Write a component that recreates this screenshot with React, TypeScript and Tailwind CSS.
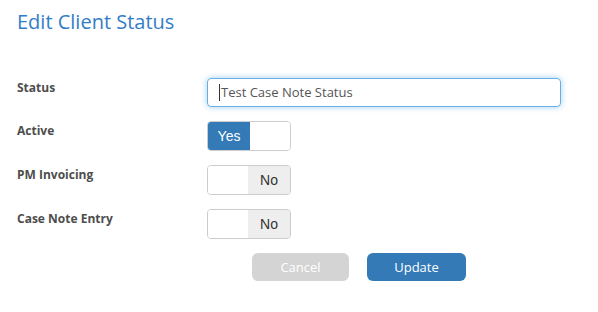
import React from "react";

function Toggle({ on }: { on: boolean }) {
  return (
    <div className="flex h-[30px] w-[84px] overflow-hidden rounded-[4px] border border-[#cccccc] bg-white" style={{ fontFamily: '"Liberation Sans", Arial, sans-serif' }}>
      {on ? (
        <>
          <div className="flex w-[42px] items-center justify-center bg-[#337ab7] text-[14px] text-white">Yes</div>
          <div className="flex-1 bg-white" />
        </>
      ) : (
        <>
          <div className="flex-1 bg-white" />
          <div className="flex w-[42px] items-center justify-center bg-[#eeeeee] text-[14px] text-[#333333]">No</div>
        </>
      )}
    </div>
  );
}

function Row({ label, children }: { label: string; children: React.ReactNode }) {
  return (
    <div className="flex">
      <div className="w-[190px] pt-[1px] text-[12px] font-bold leading-[17px] text-[#4d4d4d]">{label}</div>
      <div className="flex-1">{children}</div>
    </div>
  );
}

export default function App() {
  return (
    <div className="h-[312px] w-[598px] bg-white pl-[17px]" style={{ fontFamily: '"Open Sans", sans-serif' }}>
      <h1 className="pt-[7px] text-[20px] font-normal leading-[29px] text-[#327dc8]">Edit Client Status</h1>
      <div className="mt-[42px] flex flex-col gap-[14px]">
        <Row label="Status">
          <div className="flex h-[29px] w-[354px] items-center rounded-[4px] border border-[#66afe9] pl-[11px] text-[13px] text-[#555555] shadow-[0_0_6px_rgba(102,175,233,0.6)]">
            <span className="mr-[1px] inline-block h-[17px] w-px bg-[#333]" />
            Test Case Note Status
          </div>
        </Row>
        <Row label="Active">
          <Toggle on={true} />
        </Row>
        <Row label="PM Invoicing">
          <Toggle on={false} />
        </Row>
        <Row label="Case Note Entry">
          <Toggle on={false} />
        </Row>
        <div className="flex pl-[235px] gap-[18px]">
          <button className="h-[28px] w-[97px] rounded-[6px] bg-[#d4d4d4] pt-[1px] text-[13px] text-white">Cancel</button>
          <button className="h-[28px] w-[99px] rounded-[6px] bg-[#337ab7] pt-[1px] text-[13px] text-white">Update</button>
        </div>
      </div>
    </div>
  );
}
